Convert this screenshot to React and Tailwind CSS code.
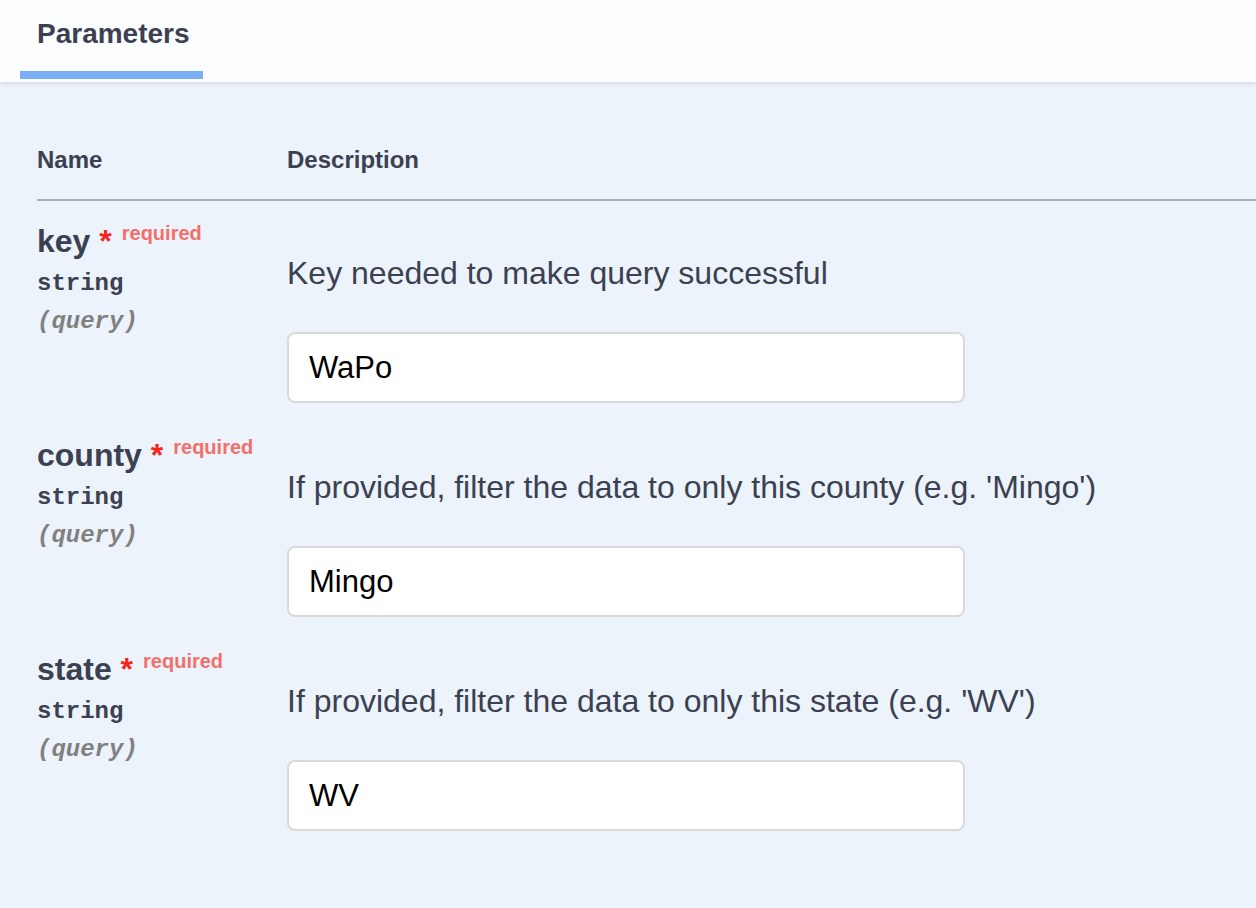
import React from "react";

const rows = [
  { name: "key", desc: "Key needed to make query successful", value: "WaPo" },
  { name: "county", desc: "If provided, filter the data to only this county (e.g. 'Mingo')", value: "Mingo" },
  { name: "state", desc: "If provided, filter the data to only this state (e.g. 'WV')", value: "WV" },
];

const sans = { fontFamily: '"Liberation Sans", Arial, Helvetica, sans-serif' };
const mono = { fontFamily: '"Liberation Mono", "Courier New", monospace' };

export default function App() {
  return (
    <div className="w-[1256px] h-[908px] overflow-hidden bg-[#ecf3fb] text-[#3b4151]" style={sans}>
      <div className="relative h-[82px] bg-[#fcfdfe] shadow-[0_2px_4px_rgba(0,0,0,0.1)] pl-[37px] pt-[18px]">
        <div className="relative inline-block">
          <span className="block text-[28px] leading-[32px] font-bold">Parameters</span>
          <span className="absolute left-[-17px] w-[183px] top-[53px] h-[8px] bg-[#79aef6]"></span>
        </div>
      </div>
      <div className="pl-[37px]">
        <div className="flex pt-[62px] pb-[23px] border-b-2 border-[#a9afbc] text-[24px] leading-[32px] font-bold">
          <div className="w-[250px] shrink-0">Name</div>
          <div>Description</div>
        </div>
        {rows.map((r) => (
          <div key={r.name} className="flex h-[214px]">
            <div className="w-[250px] shrink-0 pt-[20px]">
              <div className="text-[32px] leading-[40px] font-bold whitespace-nowrap">
                {r.name}
                <span className="text-[#f5231b]">{"\u00a0*"}</span>
                <span className="relative top-[-12px] pl-[10px] text-[20px] text-[#f2706b] font-bold">required</span>
              </div>
              <div className="text-[24px] leading-[38px] font-bold" style={mono}>
                string
              </div>
              <div className="text-[24px] leading-[38px] font-bold italic text-[#808080]" style={mono}>
                (query)
              </div>
            </div>
            <div className="pt-[21px]">
              <p className="mt-[31px] text-[32px] leading-[40px] whitespace-nowrap">{r.desc}</p>
              <input
                type="text"
                readOnly
                value={r.value}
                className="mt-[39px] block w-[678px] h-[71px] px-[20px] bg-white border-2 border-[#d9d9d9] rounded-[8px] text-[31px] text-black outline-none"
                style={sans}
              />
            </div>
          </div>
        ))}
      </div>
    </div>
  );
}
